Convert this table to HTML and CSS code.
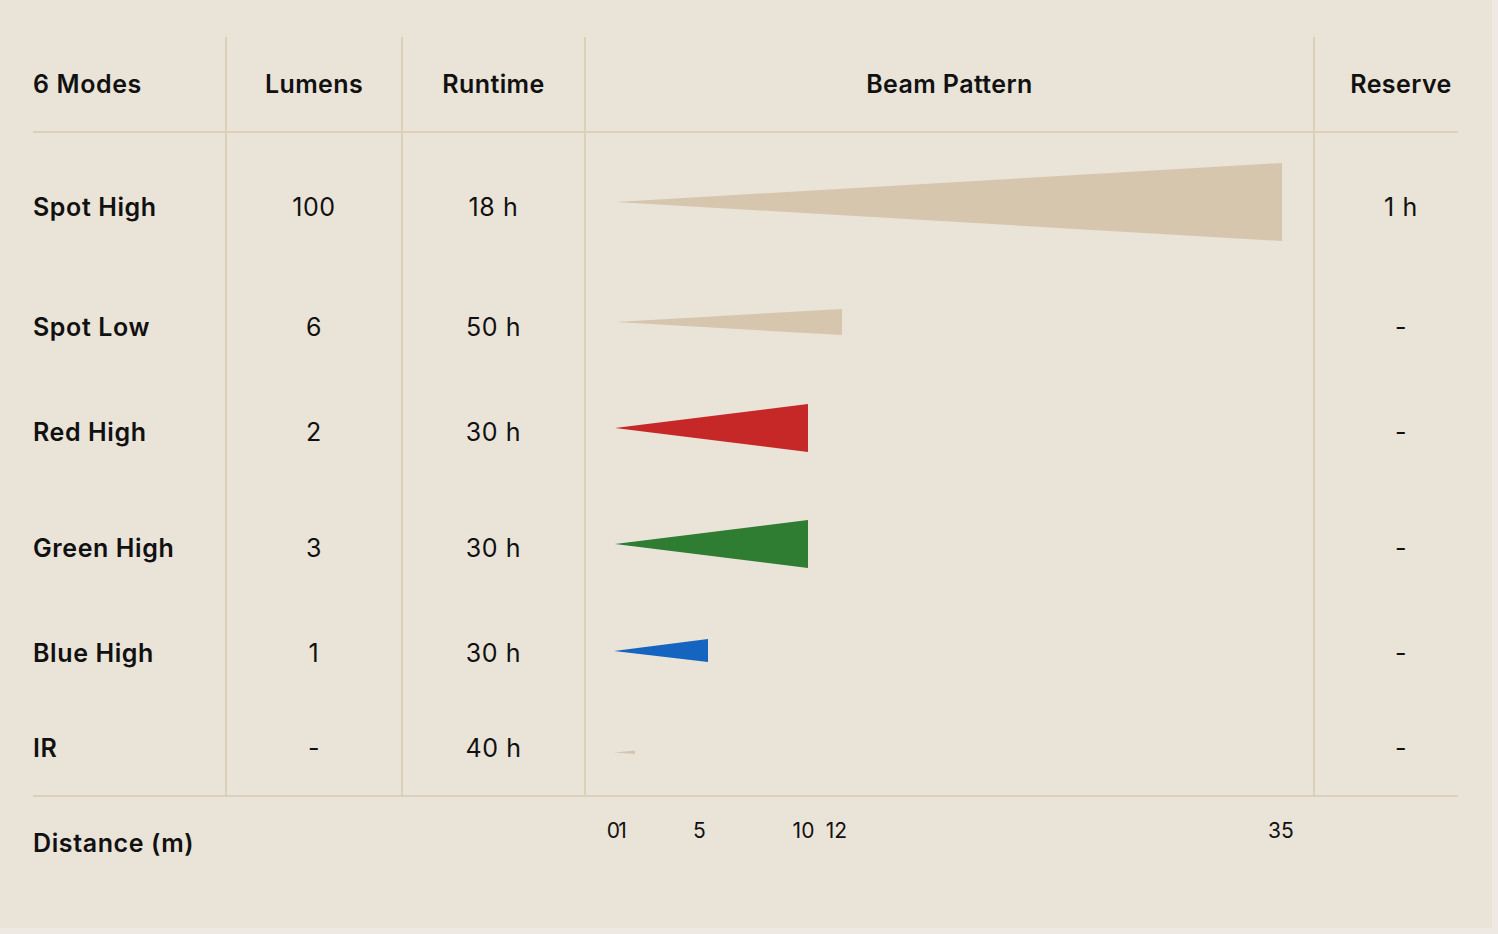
FILE: index.html
```html
<!DOCTYPE html>
<html lang="en">
<head>
<meta charset="utf-8">
<title>6 Modes</title>
<link rel="stylesheet" href="styles.css">
</head>
<body>
<div class="page">
  <div class="table">
    <div class="row head">
      <div class="cell name">6 Modes</div>
      <div class="cell val">Lumens</div>
      <div class="cell val">Runtime</div>
      <div class="cell beam-head">Beam Pattern</div>
      <div class="cell res">Reserve</div>
    </div>
    <div class="body">
      <div class="row r1">
        <div class="cell name">Spot High</div>
        <div class="cell val num">100</div>
        <div class="cell val num">18 h</div>
        <div class="cell beam"><svg width="727" height="148" viewBox="0 0 727 148"><polygon points="30,69 696,30 696,108" fill="#d6c6ae"/></svg></div>
        <div class="cell res num">1 h</div>
      </div>
      <div class="row r2">
        <div class="cell name">Spot Low</div>
        <div class="cell val num">6</div>
        <div class="cell val num">50 h</div>
        <div class="cell beam"><svg width="727" height="92" viewBox="0 0 727 92"><polygon points="30,41 256,28 256,54" fill="#d6c6ae"/></svg></div>
        <div class="cell res num">-</div>
      </div>
      <div class="row r3">
        <div class="cell name">Red High</div>
        <div class="cell val num">2</div>
        <div class="cell val num">30 h</div>
        <div class="cell beam"><svg width="727" height="118" viewBox="0 0 727 118"><polygon points="29,55 222,31 222,79" fill="#c62828"/></svg></div>
        <div class="cell res num">-</div>
      </div>
      <div class="row r4">
        <div class="cell name">Green High</div>
        <div class="cell val num">3</div>
        <div class="cell val num">30 h</div>
        <div class="cell beam"><svg width="727" height="114" viewBox="0 0 727 114"><polygon points="29,53 222,29 222,77" fill="#2e7d32"/></svg></div>
        <div class="cell res num">-</div>
      </div>
      <div class="row r5">
        <div class="cell name">Blue High</div>
        <div class="cell val num">1</div>
        <div class="cell val num">30 h</div>
        <div class="cell beam"><svg width="727" height="96" viewBox="0 0 727 96"><polygon points="28,46 122,34 122,57" fill="#1565c0"/></svg></div>
        <div class="cell res num">-</div>
      </div>
      <div class="row r6">
        <div class="cell name">IR</div>
        <div class="cell val num">-</div>
        <div class="cell val num">40 h</div>
        <div class="cell beam"><svg width="727" height="94" viewBox="0 0 727 94"><polygon points="28,51.5 49,49.5 49,53" fill="#d6c6ae"/></svg></div>
        <div class="cell res num">-</div>
      </div>
    </div>
    <div class="row dist">
      <div class="dist-label">Distance (m)</div>
      <div class="spacer"></div>
      <div class="spacer"></div>
      <div class="axis">
        <span class="tick" style="left:27.5px">0</span>
        <span class="tick" style="left:36.5px">1</span>
        <span class="tick" style="left:113.5px">5</span>
        <span class="tick" style="left:217.5px">10</span>
        <span class="tick" style="left:250.5px">12</span>
        <span class="tick" style="left:695px">35</span>
      </div>
      <div class="spacer"></div>
    </div>
  </div>
</div>
</body>
</html>
```

FILE: styles.css
```css
html, body {
  margin: 0;
  padding: 0;
  background: #efe9e3;
}

body {
  font-family: "Inter", "Liberation Sans", sans-serif;
  color: #111;
}

.page {
  width: 1492px;
  height: 928px;
  background: #eae3d7;
  box-sizing: border-box;
  padding: 37px 0 0 33px;
}

.table {
  width: 1425px;
}

.row {
  display: grid;
  grid-template-columns: 192px 176px 183px 729px 145px;
}

.cell {
  display: flex;
  align-items: center;
  font-size: 25px;
  line-height: 30px;
  letter-spacing: 0.4px;
  white-space: nowrap;
}

.cell + .cell {
  border-left: 2px solid #ddd0bb;
}

.head {
  height: 94px;
  border-bottom: 2px solid #ddd0bb;
}

.head .cell {
  font-weight: 600;
}

.name {
  font-weight: 600;
  letter-spacing: 0.6px;
}

.val, .beam-head {
  justify-content: center;
}

.res {
  justify-content: center;
  padding-left: 29px;
}

.num {
  font-weight: 400;
  letter-spacing: 0.6px;
}

.body {
  border-bottom: 2px solid #ddd0bb;
}

.body .cell {
  padding-bottom: 1px;
}

.r1 { height: 148px; }
.r2 { height: 92px; }
.r3 { height: 118px; }
.r4 { height: 114px; }
.r5 { height: 96px; }
.r6 { height: 94px; }

.body .beam {
  padding-bottom: 0;
}

.beam svg {
  display: block;
}

.dist {
  height: 90px;
}

.dist-label {
  font-size: 25px;
  font-weight: 600;
  line-height: 30px;
  letter-spacing: 0.6px;
  padding-top: 31px;
  white-space: nowrap;
}

.axis {
  position: relative;
  margin-left: 2px;
}

.tick {
  position: absolute;
  top: 22px;
  transform: translateX(-50%);
  font-size: 21px;
  line-height: 24px;
  letter-spacing: 0.2px;
}
```
